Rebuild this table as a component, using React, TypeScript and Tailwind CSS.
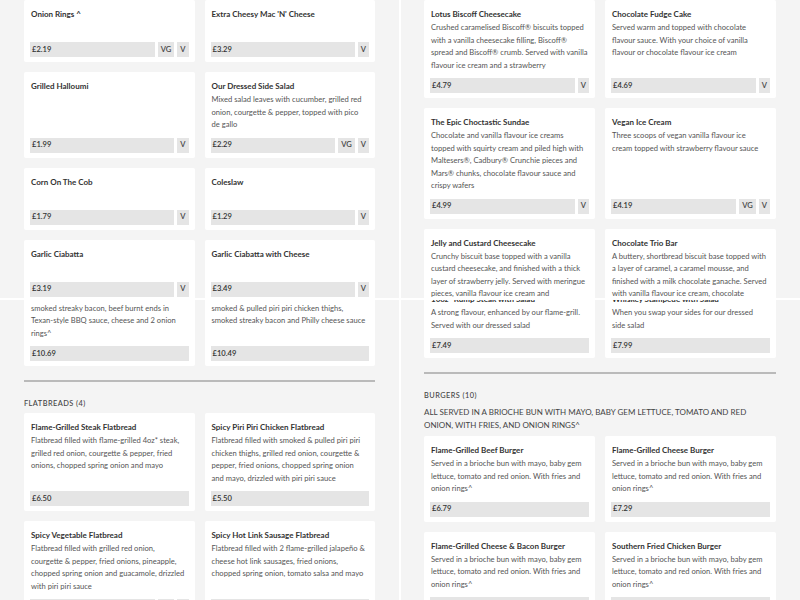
type Item = {
	title: string
	lines?: string[]
	price: string
	tags?: string[]
}

const sidesA: Item[] = [
	{ title: "Onion Rings ^", price: "£2.19", tags: ["VG", "V"] },
	{ title: "Extra Cheesy Mac 'N' Cheese", price: "£3.29", tags: ["V"] },
	{ title: "Grilled Halloumi", price: "£1.99", tags: ["V"] },
	{
		title: "Our Dressed Side Salad",
		lines: [
			"Mixed salad leaves with cucumber, grilled red",
			"onion, courgette & pepper, topped with pico",
			"de gallo",
		],
		price: "£2.29",
		tags: ["VG", "V"],
	},
	{ title: "Corn On The Cob", price: "£1.79", tags: ["V"] },
	{ title: "Coleslaw", price: "£1.29", tags: ["V"] },
	{ title: "Garlic Ciabatta", price: "£3.19", tags: ["V"] },
	{ title: "Garlic Ciabatta with Cheese", price: "£3.49", tags: ["V"] },
]

const stacks: Item[] = [
	{
		title: "Texan BBQ Stack",
		lines: [
			"Two flame-grilled beef patties topped with",
			"smoked streaky bacon, beef burnt ends in",
			"Texan-style BBQ sauce, cheese and 2 onion",
			"rings^",
		],
		price: "£10.69",
	},
	{
		title: "Philly Chicken Stack",
		lines: [
			"Flame-grilled chicken breast topped with",
			"smoked & pulled piri piri chicken thighs,",
			"smoked streaky bacon and Philly cheese sauce",
		],
		price: "£10.49",
	},
]

const flatbreads: Item[] = [
	{
		title: "Flame-Grilled Steak Flatbread",
		lines: [
			"Flatbread filled with flame-grilled 4oz* steak,",
			"grilled red onion, courgette & pepper, fried",
			"onions, chopped spring onion and mayo",
		],
		price: "£6.50",
	},
	{
		title: "Spicy Piri Piri Chicken Flatbread",
		lines: [
			"Flatbread filled with smoked & pulled piri piri",
			"chicken thighs, grilled red onion, courgette &",
			"pepper, fried onions, chopped spring onion",
			"and mayo, drizzled with piri piri sauce",
		],
		price: "£5.50",
	},
	{
		title: "Spicy Vegetable Flatbread",
		lines: [
			"Flatbread filled with grilled red onion,",
			"courgette & pepper, fried onions, pineapple,",
			"chopped spring onion and guacamole, drizzled",
			"with piri piri sauce",
		],
		price: "£6.50",
		tags: ["VG", "V"],
	},
	{
		title: "Spicy Hot Link Sausage Flatbread",
		lines: [
			"Flatbread filled with 2 flame-grilled jalapeño &",
			"cheese hot link sausages, fried onions,",
			"chopped spring onion, tomato salsa and mayo",
		],
		price: "£6.50",
	},
]

const desserts: Item[] = [
	{
		title: "Lotus Biscoff Cheesecake",
		lines: [
			"Crushed caramelised Biscoff® biscuits topped",
			"with a vanilla cheesecake filling, Biscoff®",
			"spread and Biscoff® crumb. Served with vanilla",
			"flavour ice cream and a strawberry",
		],
		price: "£4.79",
		tags: ["V"],
	},
	{
		title: "Chocolate Fudge Cake",
		lines: [
			"Served warm and topped with chocolate",
			"flavour sauce. With your choice of vanilla",
			"flavour or chocolate flavour ice cream",
		],
		price: "£4.69",
		tags: ["V"],
	},
	{
		title: "The Epic Choctastic Sundae",
		lines: [
			"Chocolate and vanilla flavour ice creams",
			"topped with squirty cream and piled high with",
			"Maltesers®, Cadbury® Crunchie pieces and",
			"Mars® chunks, chocolate flavour sauce and",
			"crispy wafers",
		],
		price: "£4.99",
		tags: ["V"],
	},
	{
		title: "Vegan Ice Cream",
		lines: [
			"Three scoops of vegan vanilla flavour ice",
			"cream topped with strawberry flavour sauce",
		],
		price: "£4.19",
		tags: ["VG", "V"],
	},
	{
		title: "Jelly and Custard Cheesecake",
		lines: [
			"Crunchy biscuit base topped with a vanilla",
			"custard cheesecake, and finished with a thick",
			"layer of strawberry jelly. Served with meringue",
			"pieces, vanilla flavour ice cream and",
			"strawberry flavour sauce",
		],
		price: "£4.79",
		tags: ["V"],
	},
	{
		title: "Chocolate Trio Bar",
		lines: [
			"A buttery, shortbread biscuit base topped with",
			"a layer of caramel, a caramel mousse, and",
			"finished with a milk chocolate ganache. Served",
			"with vanilla flavour ice cream, chocolate",
			"flavour sauce",
		],
		price: "£4.79",
		tags: ["V"],
	},
]

const salads: Item[] = [
	{
		title: "10oz* Rump Steak with Salad",
		lines: [
			"A strong flavour, enhanced by our flame-grill.",
			"Served with our dressed salad",
		],
		price: "£7.49",
	},
	{
		title: "Whiskey Stampede with Salad",
		lines: [
			"When you swap your sides for our dressed",
			"side salad",
		],
		price: "£7.99",
	},
]

const bunLines = [
	"Served in a brioche bun with mayo, baby gem",
	"lettuce, tomato and red onion. With fries and",
	"onion rings^",
]

const burgers: Item[] = [
	{ title: "Flame-Grilled Beef Burger", lines: bunLines, price: "£6.79" },
	{ title: "Flame-Grilled Cheese Burger", lines: bunLines, price: "£7.29" },
	{ title: "Flame-Grilled Cheese & Bacon Burger", lines: bunLines, price: "£7.79" },
	{ title: "Southern Fried Chicken Burger", lines: bunLines, price: "£7.29" },
]

const Card = ({ item }: { item: Item }) => (
	<div className="flex flex-col rounded-[2px] bg-white px-[6px] pt-[8px] pb-[5px]">
		<div className="min-h-[27px] flex-1 px-[1px]">
			<h3 className="text-[8px] leading-[13px] font-bold whitespace-nowrap text-[#333]">
				{item.title}
			</h3>
			{item.lines?.map((line, i) => (
				<p
					key={i}
					className="text-[7.6px] leading-[12.5px] whitespace-nowrap text-[#555]"
				>
					{line}
				</p>
			))}
		</div>
		<div className="mt-[7px] flex h-[15px] gap-[3px] text-[7.6px] font-semibold text-[#333]">
			<div className="flex flex-1 items-center bg-[#e5e5e5] pl-[2px]">
				{item.price}
			</div>
			{item.tags?.map((tag) => (
				<div
					key={tag}
					className="flex items-center bg-[#e5e5e5] px-[3px] text-[#444]"
				>
					{tag}
				</div>
			))}
		</div>
	</div>
)

const Grid = ({ items }: { items: Item[] }) => (
	<div className="grid grid-cols-2 gap-[10px]">
		{items.map((item) => (
			<Card key={item.title} item={item} />
		))}
	</div>
)

const SectionHead = ({ label }: { label: string }) => (
	<>
		<div className="mt-[14px] h-[2px] bg-[#bababa]" />
		<h2 className="pt-[16px] text-[7.4px] leading-[12px] font-medium tracking-[0.06em] text-[#444] uppercase">
			{label}
		</h2>
	</>
)

export default function App() {
	return (
		<div className="grid h-[600px] w-[800px] grid-cols-[399px_399px] grid-rows-[298px_300px] gap-x-[2px] gap-y-[2px] overflow-hidden bg-white [font-family:Lato,sans-serif]">
			<div className="overflow-hidden bg-[#f4f4f4] px-[24px]">
				<Grid items={sidesA} />
			</div>

			<div className="overflow-hidden bg-[#f4f4f4] pr-[24px] pl-[23px]">
				<Grid items={desserts} />
			</div>

			<div className="overflow-hidden bg-[#f4f4f4] px-[24px]">
				<div className="-mt-[32px]">
					<Grid items={stacks} />
					<SectionHead label="Flatbreads (4)" />
					<div className="mt-[3px]">
						<Grid items={flatbreads} />
					</div>
				</div>
			</div>

			<div className="overflow-hidden bg-[#f4f4f4] pr-[24px] pl-[23px]">
				<div className="-mt-[15px]">
					<Grid items={salads} />
					<SectionHead label="Burgers (10)" />
					<p className="mt-[4px] mb-[5px] text-[8px] leading-[12.5px] text-[#444] uppercase">
						All served in a brioche bun with mayo, baby gem lettuce, tomato and red
						<br />
						onion, with fries, and onion rings^
					</p>
					<Grid items={burgers} />
				</div>
			</div>
		</div>
	)
}
